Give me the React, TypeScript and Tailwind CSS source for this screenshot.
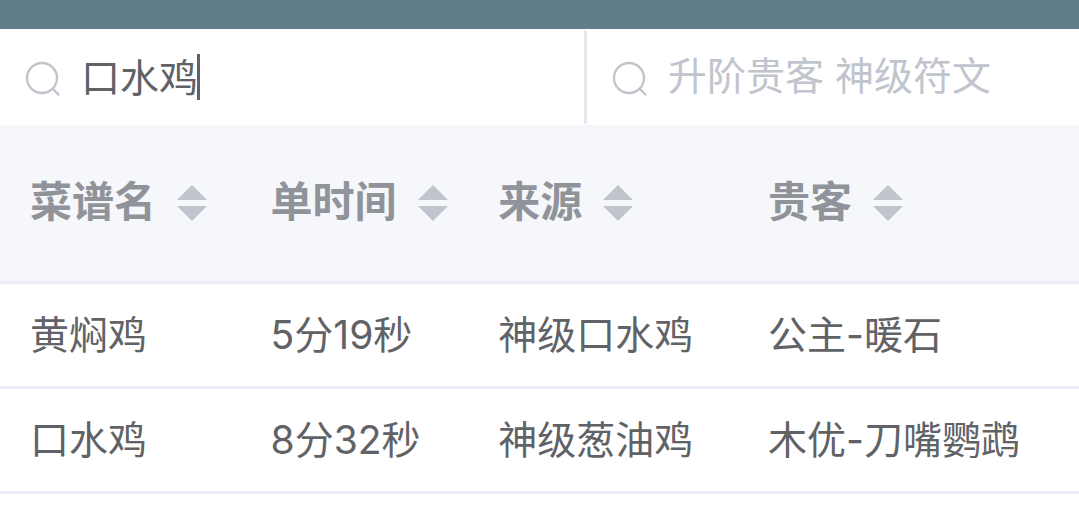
import { useState } from 'react';

const columns = [
  { title: '菜谱名', width: 'w-[22.3%]' },
  { title: '单时间', width: 'w-[21.1%]' },
  { title: '来源', width: 'w-[25%]' },
  { title: '贵客', width: 'w-[31.6%]' },
];

const rows = [
  ['黄焖鸡', '5分19秒', '神级口水鸡', '公主-暖石'],
  ['口水鸡', '8分32秒', '神级葱油鸡', '木优-刀嘴鹦鹉'],
];

function SearchIcon() {
  return (
    <svg viewBox="0 0 36 40" className="h-10 w-9 shrink-0" fill="none" stroke="#c0c4cc" strokeWidth="2.3" aria-hidden="true">
      <circle cx="17" cy="21" r="15" />
      <path d="M27.6 31.6 34.2 38.2" />
    </svg>
  );
}

function SortIcon() {
  return (
    <svg viewBox="0 0 32 36" className="h-9 w-8 shrink-0" fill="#c0c4cc" aria-hidden="true">
      <path d="M16 0 31 15H1z" />
      <path d="M1 21h30L16 36z" />
    </svg>
  );
}

export default function App() {
  const [recipe, setRecipe] = useState('口水鸡');
  const [guest, setGuest] = useState('');

  return (
    <div className="min-h-screen bg-white font-['Inter','Noto_Sans_CJK_SC',sans-serif] text-[39px] leading-[54px] text-[#606266]">
      <header className="h-[29px] bg-[#607d8b]" />
      <div className="flex h-24">
        <label className="relative flex w-[54.4%] min-w-0 items-center gap-5 pl-[25px]">
          <SearchIcon />
          <input
            aria-label="菜谱名"
            value={recipe}
            onChange={(e) => setRecipe(e.target.value)}
            className="h-18 min-w-0 flex-1 bg-transparent pb-1 caret-transparent outline-none"
          />
          <span className="absolute top-[25px] left-[197px] h-[46px] w-[3px] bg-[#606266]" />
          <span className="my-px w-[3px] self-stretch rounded-full bg-[#e4e7ed]" />
        </label>
        <label className="flex min-w-0 flex-1 items-center gap-5 pl-[25px]">
          <SearchIcon />
          <input
            aria-label="贵客"
            placeholder="升阶贵客 神级符文"
            value={guest}
            onChange={(e) => setGuest(e.target.value)}
            className="h-18 min-w-0 flex-1 bg-transparent pb-1 outline-none placeholder:text-[#c0c4cc]"
          />
        </label>
      </div>
      <table className="w-full table-fixed border-separate border-spacing-0 text-left">
        <thead>
          <tr className="h-[159px] bg-[#f5f7fa]">
            {columns.map((c) => (
              <th key={c.title} className={`${c.width} border-b-3 border-[#ebeef5] p-0 pl-[30px] text-[42px] font-bold text-[#909399]`}>
                <button type="button" className="flex items-center gap-5 whitespace-nowrap">
                  <span className="pb-0.5">{c.title}</span>
                  <SortIcon />
                </button>
              </th>
            ))}
          </tr>
        </thead>
        <tbody>
          {rows.map((row) => (
            <tr key={row[0]} className="h-[105px]">
              {row.map((cell) => (
                <td key={cell} className="border-b-3 border-[#ebeef5] p-0 pl-[30px] whitespace-nowrap">
                  {cell}
                </td>
              ))}
            </tr>
          ))}
        </tbody>
      </table>
    </div>
  );
}
